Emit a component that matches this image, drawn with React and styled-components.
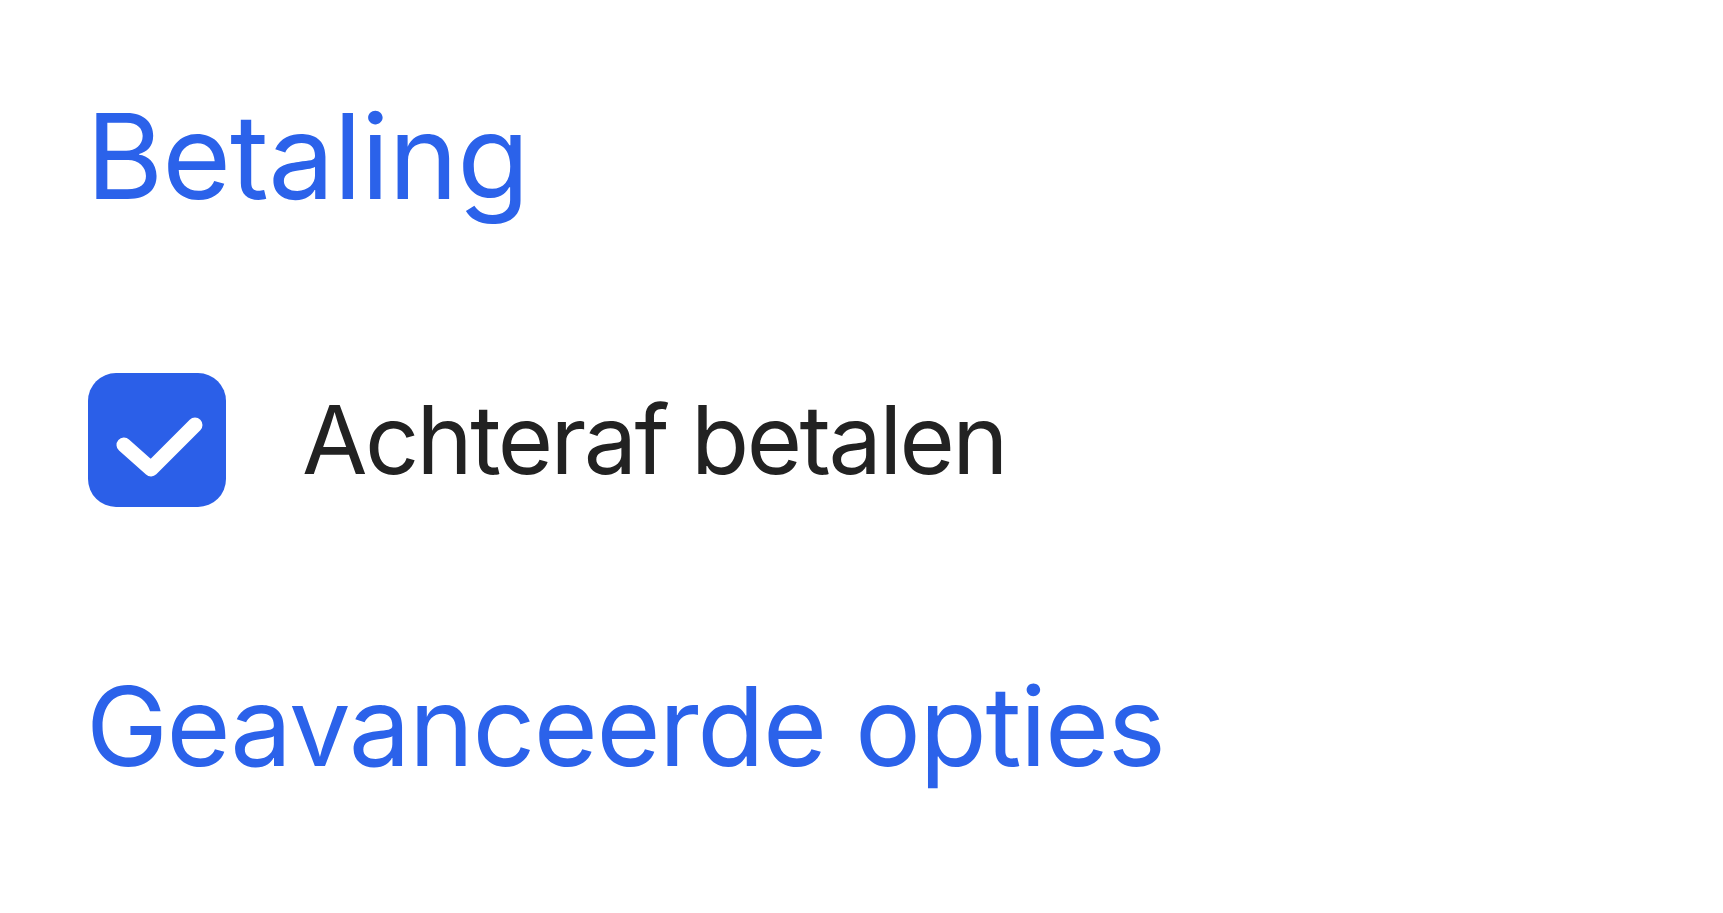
import React from 'react';
import styled, { createGlobalStyle } from 'styled-components';

const GlobalStyle = createGlobalStyle`
  html, body {
    margin: 0;
    padding: 0;
    background: #ffffff;
  }
  body {
    font-family: Inter, "Noto Sans", "Liberation Sans", sans-serif;
  }
`;

const Page = styled.div`
  width: 1723px;
  height: 913px;
  box-sizing: border-box;
  padding: 86px 0 0 86px;
  display: flex;
  flex-direction: column;
  background: #fff;
`;

const Heading = styled.h2`
  margin: 0;
  font-family: Inter, "Noto Sans", sans-serif;
  font-weight: 400;
  font-size: ${({ size }) => size}px;
  line-height: 1.2;
  color: #2b62ea;
  letter-spacing: ${({ spacing }) => spacing}px;
`;

const OptionRow = styled.label`
  display: flex;
  align-items: center;
  gap: 76px;
  margin: 145px 0 153px 2px;
  cursor: pointer;
`;

const Box = styled.span`
  width: 138px;
  height: 134px;
  border-radius: 28px;
  background: #2b5fe8;
  display: flex;
  align-items: center;
  justify-content: center;
  flex-shrink: 0;
`;

const OptionText = styled.span`
  font-family: Inter, "Noto Sans", sans-serif;
  font-size: 95px;
  font-weight: 400;
  color: #222222;
  letter-spacing: -2.6px;
`;

const Check = () => (
  <svg width="138" height="134" viewBox="0 0 138 134">
    <path
      d="M36 72 L63 96 L107 52"
      fill="none"
      stroke="#fff"
      strokeWidth="15"
      strokeLinecap="round"
      strokeLinejoin="round"
    />
  </svg>
);

export default function App() {
  return (
    <>
      <GlobalStyle />
      <Page>
        <Heading size={118} spacing={-1}>Betaling</Heading>
        <OptionRow>
          <Box>
            <Check />
          </Box>
          <OptionText>Achteraf betalen</OptionText>
        </OptionRow>
        <Heading size={110} spacing={-1.5}>Geavanceerde opties</Heading>
      </Page>
    </>
  );
}
